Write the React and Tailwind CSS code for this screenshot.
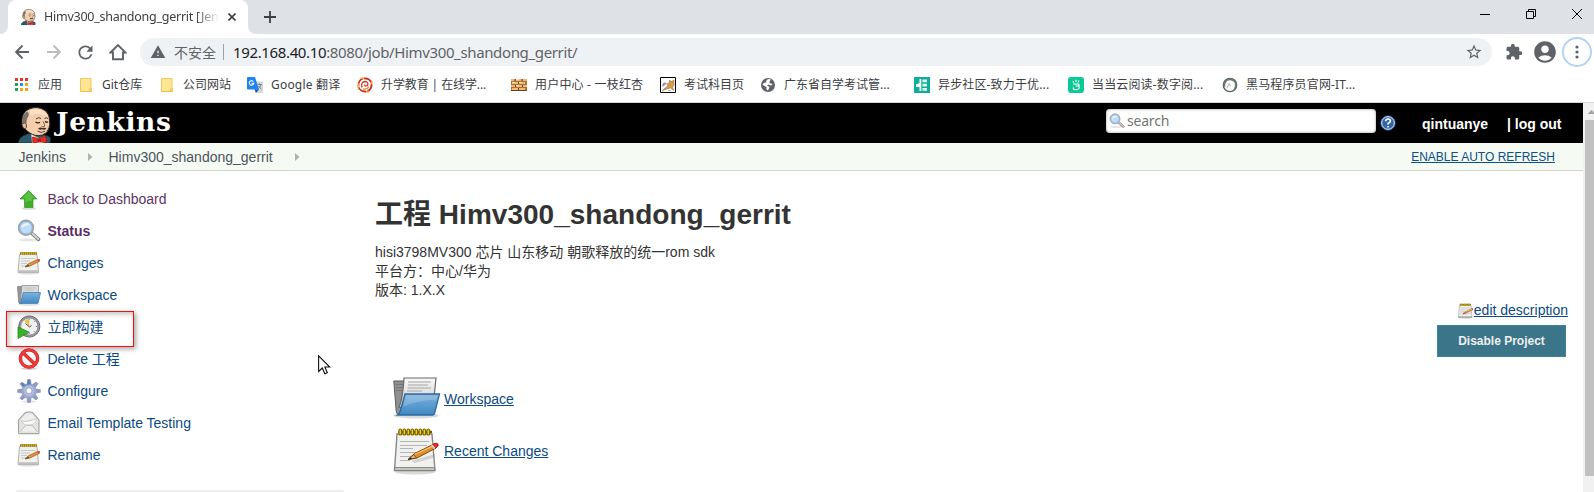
import React from "react";
import { MdExtension, MdStarBorder, MdAccountCircle, MdRefresh, MdWarning } from "react-icons/md";

const uiFont = "font-['Noto_Sans','Noto_Sans_CJK_SC',sans-serif]";

function Butler({ className }) {
  return (
    <svg className={className} viewBox="0 0 34 36">
      <path d="M0 36 L1.500 32 Q4 28.500 11 26.500 L26 28 Q31.500 29 32.500 31 L32 36 Z" fill="#2d5a6b" stroke="#16303a" strokeWidth=".7" />
      <path d="M4 14 Q4 5 11 2 Q20 -1.500 27 3.500 Q31.500 7 31.500 13.500 Q32.500 17 31 21 Q29.500 26.500 24.500 28 Q17 30 11 25.500 Q7.500 23 6 20.500 Q3.500 18 4 14 Z" fill="#f3cfae" stroke="#2d2521" strokeWidth="1" />
      <path d="M4.300 14 Q4.300 7 9 4.500 Q11.500 6 10.500 9 Q8 12 8.500 16 L7 20.500 Q3.800 18 4.300 14 Z" fill="#77736f" />
      <path d="M3.800 17 Q7 14.500 8.500 17.500 Q9 21 7 22 Q4.500 21.500 3.800 17 Z" fill="#eab998" stroke="#39312d" strokeWidth=".8" />
      <path d="M12 3.300 Q19 0 26 4.500 Q29 7 29.500 10 Q22 4 12 9 Z" fill="#fbdfc4" />
      <path d="M18 12 q2.500 -2.500 5 -.500 M26.500 11.500 q2 -1.500 3.500 0" fill="none" stroke="#4b3a30" strokeWidth="1" />
      <path d="M17.500 15 q2.500 1.800 4.500 .300 M27 14.500 q1.500 1.300 3 .300" fill="none" stroke="#1d1512" strokeWidth="1.200" />
      <path d="M25 14.500 Q27.500 18.500 26.500 19.500 Q25 20.200 23.500 19.300" fill="none" stroke="#7c5945" strokeWidth=".9" />
      <path d="M20 21.500 Q22.500 19.800 24.500 21 Q27 20 28.500 21.800 Q26 23.300 24.300 22.300 Q22 23.500 20 21.500 Z" fill="#3e3029" />
      <path d="M19.500 24 Q23 26.800 27 24.200" fill="none" stroke="#6e3f32" strokeWidth="1" />
      <path d="M13 27 L14 36 H28 L27.500 29 L21 31 Z" fill="#f4f4f4" stroke="#444" strokeWidth=".4" />
      <path d="M14.500 30 Q18 30.500 20.500 32 Q24 29.500 28 29.500 L28.500 36 L21.500 34.500 L15 36.500 Z" fill="#ee2a20" stroke="#8b1510" strokeWidth=".7" />
      <rect x="19.500" y="31.500" width="3.500" height="3.800" rx="1" fill="#b41913" />
    </svg>
  );
}

function Notepad({ className }) {
  return (
    <svg className={className} viewBox="0 0 48 48">
      <ellipse cx="22" cy="45" rx="20" ry="2.500" fill="#000" opacity=".15" />
      <path d="M4 7 H39 L42 43.500 H1.500 Z" fill="#f1f1ef" stroke="#888a85" strokeWidth="1.400" />
      <path d="M2 40.500 H41.500 L42 43.500 H1.500 Z" fill="#c4c5c1" stroke="#777" strokeWidth=".8" />
      <path d="M7 14.500 H36 M7 18.500 H34 M7 21.500 H20 M7 25.500 H26 M7 29.500 H23 M7 33.500 H17" stroke="#b4b5b1" strokeWidth="1.200" />
      <path d="M5.500 5 H39" stroke="#6e5a00" strokeWidth="2.500" />
      <g fill="#edd400" stroke="#7a6200" strokeWidth="1.100">
        {[6, 10, 14, 18, 22, 26, 30, 34].map((x) => (
          <rect key={x} x={x} y="2" width="2.600" height="6" rx="1.300" />
        ))}
      </g>
      <path d="M18 34 L42 27 L40 31 L22 36 Z" fill="#000" opacity=".12" />
      <path d="M15 32.500 L21.500 26.500 L40 17.500 L43 21 L24 31 Z" fill="#dd8e2e" stroke="#8a4b08" strokeWidth="1" />
      <path d="M22 27.200 L41 18.600" stroke="#f7c46c" strokeWidth="1.200" />
      <path d="M15 32.500 L20.500 27.700 L23.500 31 Z" fill="#d8b98a" stroke="#6d3c08" strokeWidth=".8" />
      <path d="M15 32.500 l2.800 -2.300 l1.300 1.600z" fill="#222" />
      <path d="M39.500 17.500 L42 16.300 Q46 16 45 19 L42.500 21.500 Z" fill="#ef2929" stroke="#a40000" strokeWidth=".8" />
      <path d="M38 18.500 L39.600 17.500 L42.600 21.200 L41 22 Z" fill="#d3d7cf" />
    </svg>
  );
}

const SmallNotepad = () => (
  <svg className="size-6" viewBox="0 0 24 24">
    <ellipse cx="11.500" cy="22.300" rx="10" ry="1.200" fill="#000" opacity=".12" />
    <path d="M2.500 3.500 H20 L21.500 21.500 H1 Z" fill="#f0f0ee" stroke="#a6a8a3" strokeWidth=".9" />
    <path d="M1.300 19.300 H21.200 L21.500 21.500 H1 Z" fill="#bfc0bc" />
    <path d="M4 7.500 H18 M4 10 H13 M4 12.500 H10 M4 15 H9" stroke="#c3c4c1" strokeWidth=".9" />
    <path d="M3 1 H20 V3.500 H3 Z" fill="#c9a92c" />
    <path d="M3.500 1 v3 M5.500 1 v3 M7.500 1 v3 M9.500 1 v3 M11.500 1 v3 M13.500 1 v3 M15.500 1 v3 M17.500 1 v3 M19.500 1 v3" stroke="#8a6f10" strokeWidth=".6" />
    <path d="M8 16 L11.500 12.700 L20.500 8.500 L22.300 10.400 L13 15 Z" fill="#e2953a" stroke="#94581a" strokeWidth=".7" />
    <path d="M8 16 L10.800 13.600 L12.300 15 Z" fill="#5a4630" />
    <path d="M20 8.700 Q22.500 7 23.200 9 L22 10.700 Z" fill="#e43a2f" />
  </svg>
);

function Folder({ className }) {
  return (
    <svg className={className} viewBox="0 0 48 48">
      <defs>
        <linearGradient id="folderBlue" x1="0" y1="0" x2="0" y2="1">
          <stop offset="0" stopColor="#7db3de" />
          <stop offset="1" stopColor="#3f87c2" />
        </linearGradient>
        <linearGradient id="paperGrey" x1="0" y1="0" x2="0" y2="1">
          <stop offset="0" stopColor="#fafafa" />
          <stop offset="1" stopColor="#c8c8c8" />
        </linearGradient>
      </defs>
      <ellipse cx="23" cy="40.500" rx="23" ry="3" fill="#000" opacity=".15" />
      <path d="M.8 6 H11 L12 9.500 V39 H5 Q3.500 39 3.200 36 Z" fill="#8f918e" stroke="#5c5d5b" strokeWidth="1" />
      <path d="M3 9.500 h7 M3 12.500 h7 M3 15.500 h7" stroke="#777" strokeWidth="1" />
      <path d="M11 3 H43 L40 32.500 H6 Q10 22.500 11 3 Z" fill="url(#paperGrey)" stroke="#686a67" strokeWidth="1.200" />
      <path d="M15 7 H38 M15 10 H35 M14.500 13 H38 M14 16 H29" stroke="#a4a5a3" strokeWidth="1.200" />
      <path d="M12 19 H46.500 L41.500 38.500 Q41 40 39.500 40 H4.500 Q7 38.500 8 33.500 Z" fill="url(#folderBlue)" stroke="#2c699f" strokeWidth="1.300" />
      <path d="M13.200 20.500 H44.500 L43.500 24.500 Q24 25.500 10.500 31.500 Z" fill="#fff" opacity=".18" />
    </svg>
  );
}

const SmallFolder = () => (
  <svg className="size-6" viewBox="0 0 24 24">
    <ellipse cx="12" cy="21.500" rx="11" ry="1.500" fill="#000" opacity=".12" />
    <path d="M.5 3.500 H5 V20.500 H3 Q1.800 20.500 1.700 19 Z" fill="#969795" stroke="#777876" strokeWidth=".7" />
    <path d="M5 2.500 H21.800 L20.500 16 H3.500 Z" fill="#dcdcdb" stroke="#8b8c8a" strokeWidth=".8" />
    <path d="M7.500 5 H19 M7.500 7 H17" stroke="#b9bab8" strokeWidth=".8" />
    <path d="M6.200 9.500 H23.500 L21.300 19.700 Q21 20.500 20.200 20.500 H2.500 Q4 19.500 4.500 17 Z" fill="url(#folderBlue)" stroke="#4683b8" strokeWidth=".8" />
  </svg>
);

function Magnifier({ className }) {
  return (
    <svg className={className} viewBox="0 0 24 24">
      <ellipse cx="11" cy="21" rx="9" ry="1.500" fill="#000" opacity=".1" />
      <path d="M15 14.500 L21.500 20.300" stroke="#7c7d7b" strokeWidth="3.600" strokeLinecap="round" />
      <path d="M15.500 14.700 L21.300 20" stroke="#d5d6d3" strokeWidth="1.900" strokeLinecap="round" strokeDasharray="2.200 .8" />
      <circle cx="9" cy="8.800" r="7.500" fill="#bcd8f3" stroke="#9fa19e" strokeWidth="1.400" />
      <circle cx="9" cy="8.800" r="6.300" fill="#c0dbf5" stroke="#7ba9d6" strokeWidth=".9" />
      <path d="M4.500 9.500 Q4.500 4 10 3.900 Q12 4 13 6 Q8 6 4.500 9.500 Z" fill="#fff" opacity=".7" />
    </svg>
  );
}

const UpArrow = () => (
  <svg className="size-6" viewBox="0 0 24 24">
    <ellipse cx="12" cy="21.500" rx="7" ry="1.300" fill="#000" opacity=".15" />
    <path d="M11.700 3.500 L19.800 12 H16 V20.500 H7.500 V12 H3 Z" fill="#3fb02c" stroke="#3d9d2b" strokeWidth=".8" strokeLinejoin="round" />
    <path d="M11.700 4.800 L17.500 11 H15 V14 Q11 13 8.500 15.500 V11 H5.500 Z" fill="#72cc58" opacity=".6" />
  </svg>
);

const ClockPlay = () => (
  <svg className="size-6" viewBox="0 0 24 24">
    <circle cx="12.300" cy="11.500" r="10.600" fill="#9a98a3" stroke="#64626f" strokeWidth=".9" />
    <circle cx="12.300" cy="11.500" r="8.600" fill="#f0f0ee" stroke="#807e88" strokeWidth=".7" />
    <path d="M12.300 11.500 L7.300 5.500 Q9.500 4 12.300 4 Z" fill="#e3c24e" />
    <path d="M12.500 12 L8.500 8.500 M12.500 12 L14.500 10.500" stroke="#4a4a4a" strokeWidth="1" />
    <path d="M12.300 3.500v1.200 M20.200 11.500h-1.400 M12.300 19v-1.200 M17.800 6l-.8 .8 M17.800 17l-.8 -.8" stroke="#777" strokeWidth=".9" />
    <path d="M1 12 L12.300 17.200 L1 23.500 Z" fill="#35b429" stroke="#26881b" strokeWidth=".8" />
  </svg>
);

const NoEntry = () => (
  <svg className="size-6" viewBox="0 0 24 24">
    <ellipse cx="12" cy="21.500" rx="8" ry="1.500" fill="#000" opacity=".18" />
    <circle cx="12" cy="11.500" r="8.600" fill="#f7f7f7" stroke="#c41a1a" strokeWidth="3.400" />
    <path d="M6 5.700 L18 17.300" stroke="#c41a1a" strokeWidth="3.300" />
    <circle cx="12" cy="11.500" r="8.600" fill="none" stroke="#f03a3a" strokeWidth="2.300" />
    <path d="M6 5.700 L18 17.300" stroke="#f03a3a" strokeWidth="2.200" />
  </svg>
);

const Gear = () => (
  <svg className="size-6" viewBox="0 0 24 24">
    <ellipse cx="12" cy="22.500" rx="7" ry="1.200" fill="#000" opacity=".12" />
    <g fill="#8d9bc4" stroke="#7783ab" strokeWidth=".5">
      {[0, 45, 90, 135, 180, 225, 270, 315].map((a) => (
        <path key={a} d="M9.800 6 L10.700 .6 H13.300 L14.200 6 Z" transform={`rotate(${a} 12 12)`} />
      ))}
    </g>
    <circle cx="12" cy="12" r="7.500" fill="#9ca8ce" />
    <path d="M10.700 .6 H13.300 L14.200 5.500 Q9 5 6.500 8 L4 5.500 L5.500 3.800 L8.500 6 L9.800 5.500 Z" fill="#5478b0" opacity=".75" />
    <circle cx="12" cy="12" r="5.300" fill="#b4bedc" />
    <circle cx="12" cy="11.800" r="3" fill="#fff" stroke="#8f9ac0" strokeWidth=".8" />
  </svg>
);

const Envelope = () => (
  <svg className="size-6" viewBox="0 0 24 24">
    <path d="M1.500 9 L8 2 Q9 1 11 1 H13 Q15 1 16 2 L22 9 V21.500 Q22 22.800 20.500 22.800 H3 Q1.500 22.800 1.500 21.500 Z" fill="#e3e4e1" stroke="#a0a29e" strokeWidth="1.100" />
    <path d="M2.800 9.700 L9 3 H15 L20.800 9.700 L16 14 L20.500 20.500 H3 L7.500 14 Z" fill="#eff0ee" />
    <path d="M4 9.500 Q9 12 18.500 7.800 Q19.500 9 19.500 10 L15 14.200 H8.500 L4 10.500 Z" fill="#fafafa" stroke="#bdbebb" strokeWidth=".8" />
    <path d="M3 21 L8.500 14.200 H15 L20.500 21" fill="none" stroke="#bdbebb" strokeWidth="1" />
    <path d="M2 22.500 H21.500" stroke="#a9aaa7" strokeWidth="1" />
  </svg>
);

const bookmarkFolder = (
  <svg className="h-4 w-3" viewBox="0 0 12 16">
    <path d="M.5 1.500 H11 V11 L11.500 12 V14.500 H.5 Z" fill="#ffe694" stroke="#f2c75c" strokeWidth="1" />
    <path d="M10 10.500 L11.500 11 V14.500 H9 V12 Z" fill="#f5cd62" />
    <path d="M.5 14.500 H11.500" stroke="#f2bc3e" strokeWidth="1" />
  </svg>
);

const appsGrid = (
  <svg className="size-[14px]" viewBox="0 0 14 14">
    <path d="M0 0h3v3H0zM5 0h3v3H5zM10 0h3v3h-3z" fill="#ea3323" />
    <path d="M0 5h3v3H0z" fill="#1da45f" /><path d="M5 5h3v3H5z" fill="#2a8cf0" /><path d="M10 5h3v3h-3z" fill="#f2a60d" />
    <path d="M0 10h3v3H0z" fill="#1da45f" /><path d="M5 10h3v3H5zM10 10h3v3h-3z" fill="#f2a60d" />
  </svg>
);

const translateIcon = (
  <svg className="size-4" viewBox="0 0 16 16">
    <path d="M5 4.500 H16 V16 H9 Z" fill="#d5d7da" />
    <path d="M1 0 H8 L12 12.500 H1 Q0 12.500 0 11.500 V1 Q0 0 1 0 Z" fill="#1f84ee" />
    <path d="M7.500 12.500 H12 L9 16 Z" fill="#1257b8" />
    <path d="M6.300 4.600 A2.200 2.200 0 1 0 6.700 6.300 H4.700" fill="none" stroke="#fff" strokeWidth="1.100" />
    <path d="M10.500 7.500 h4.500 M12.500 6.500 v1 M14 7.500 Q13 10.500 11 12 M11.500 9 Q13 11 14.500 12" fill="none" stroke="#6b7d8c" strokeWidth=".9" />
  </svg>
);

const swirl = (
  <svg className="size-4" viewBox="0 0 16 16">
    <g fill="none" strokeWidth="1.700">
      {[0, 90, 180, 270].map((a) => (
        <g key={a} transform={`rotate(${a} 8 8)`}>
          <path d="M1.500 9 Q1 3.500 6 1.500" stroke="#c9302c" />
          <path d="M3.500 1.500 Q7 .5 10 2.300" stroke="#f0a232" strokeWidth="1.400" />
        </g>
      ))}
      <path d="M5 10.500 Q3.500 5 8 4.500 Q12 5 10.500 8.500 Q8 10 7.500 7.500" stroke="#d2372a" strokeWidth="1.300" />
      <path d="M6 12 Q10 13 12 9.500" stroke="#e87c28" strokeWidth="1.200" />
    </g>
  </svg>
);

const bricks = (
  <svg className="size-4" viewBox="0 0 16 16">
    <path d="M0 2h16v12H0z" fill="#a57443" />
    <path d="M0 2h4v2H0zM5 2h6v2H5zM12 2h4v2h-4zM1 5h6v2H1zM8 5h6v2H8zM0 8h4v2H0zM5 8h6v2H5zM12 8h4v2h-4zM1 11h6v2H1zM8 11h6v2H8z" fill="#f5ba70" />
    <path d="M5 2h3v1H5zM1 5h3v1H1zM8 5h3v1H8zM5 8h3v1H5z" fill="#ffe6bd" />
    <path d="M4 2v2M11 2v2M7.500 5v2M4.500 8v2M11.500 8v2M7.500 11v2M0 13.500h16" stroke="#634428" strokeWidth="1" />
  </svg>
);

const cat = (
  <svg className="size-4" viewBox="0 0 16 16">
    <path d="M.5 .5h15v15H.5z" fill="#fff" stroke="#000" />
    <path d="M2 14 L5 11 L8 9 L7 7 L9 6 L9.500 3 L11.500 4.500 L14 3 V8 L12.500 10 L14 13.500 L10.500 11 L7 12 L4 13 Z" fill="#d79b48" stroke="#7a572d" strokeWidth=".4" />
    <path d="M2 9.500 Q2.500 5 5.500 5.500 L7 7 L5 7.500 L4 9 Z" fill="#8e9196" />
    <path d="M2 13.500 l3 -1 M8 13.500 l3 0" stroke="#999" strokeWidth=".7" />
  </svg>
);

const globe = (
  <svg className="size-4" viewBox="0 0 16 16">
    <circle cx="8" cy="8" r="7" fill="#5f6368" />
    <path d="M2.500 7.500 Q4 5 6.500 5.500 L6 4 L8 2 L11 2.600 Q9 4.500 9.500 6 L12.500 7 Q12 8.500 10.500 8.500 L8.500 7.500 L7 8.500 L9.500 10 L8 13.500 L6.500 12.500 L6.500 10 L4.500 9 Z" fill="#fff" />
  </svg>
);

const epubit = (
  <svg className="size-4" viewBox="0 0 16 16">
    <path d="M0 0h16v16H0z" fill="#0fae9b" />
    <path d="M5.500 2 H7.300 V14 H5.500 V10 H2 V7.500 L5.500 6 Z" fill="#fff" />
    <path d="M8.500 2.500h4.500v2.800H8.500zM8.500 6.800h4.500v2.700H8.500zM8.500 11h4.500v2.800H8.500z" fill="#dff7f2" />
  </svg>
);

const dangdang = (
  <svg className="size-4" viewBox="0 0 16 16">
    <rect width="16" height="16" rx="3" fill="#0bc996" />
    <path d="M5 4 L5.500 5.500 M8 2.800 V5 M11 3.500 L10 5.500 M5 7 H10 Q11.500 7 11 9 H7.500 M10 9 Q12 9.500 11 11.500 Q9 13.800 5.500 12 L5 10.500" fill="none" stroke="#fff" strokeWidth="1.100" />
  </svg>
);

const horse = (
  <svg className="size-4" viewBox="0 0 16 16">
    <circle cx="8" cy="8" r="6.700" fill="#fff" stroke="#56605e" strokeWidth="1.300" />
    <path d="M1.300 6 Q3 1 9 1.200 Q15 2 15 8 Q14 13 10 14.500 Q14 10 12.500 5.500 Q9 2 5 4 Q3 6 3.300 10 Q1 9 1.300 6 Z" fill="#6d7775" />
    <path d="M5 11 L7 6.500 M7 6.500 L8.500 9" stroke="#9aa09f" strokeWidth=".8" />
  </svg>
);

const bookmarks = [
  { icon: appsGrid, label: "应用", box: "ml-[15px] w-[65px]", gap: "ml-[9px]" },
  { icon: bookmarkFolder, label: "Git仓库", box: "w-[81px]", gap: "ml-[10px]" },
  { icon: bookmarkFolder, label: "公司网站", box: "w-[86px]", gap: "ml-[10px]" },
  { icon: translateIcon, label: "Google 翻译", box: "w-[110px]", gap: "ml-2", track: "tracking-[0.2px]" },
  { icon: swirl, label: "升学教育 | 在线学...", box: "w-[154px]", gap: "ml-2", track: "tracking-[-0.1px]" },
  { icon: bricks, label: "用户中心 - 一枝红杏", box: "w-[149px]", gap: "ml-2", track: "tracking-[0.2px]" },
  { icon: cat, label: "考试科目页", box: "w-[100px]", gap: "ml-2" },
  { icon: globe, label: "广东省自学考试管...", box: "w-[154px]", gap: "ml-2" },
  { icon: epubit, label: "异步社区-致力于优...", box: "w-[154px]", gap: "ml-2", track: "tracking-[0.15px]" },
  { icon: dangdang, label: "当当云阅读-数字阅...", box: "w-[154px]", gap: "ml-2", track: "tracking-[0.15px]" },
  { icon: horse, label: "黑马程序员官网-IT...", box: "w-[154px]", gap: "ml-2", track: "tracking-[0.15px]" },
];

const tasks = [
  { icon: <UpArrow />, label: "Back to Dashboard", color: "text-[#5c3566]" },
  { icon: <Magnifier className="size-6" />, label: "Status", color: "font-bold text-[#5c2d66]" },
  { icon: <SmallNotepad />, label: "Changes", color: "text-[#0b4a82]" },
  { icon: <SmallFolder />, label: "Workspace", color: "text-[#0b4a82]" },
  { icon: <ClockPlay />, label: "立即构建", color: "text-[#0b4a82]", marked: true },
  { icon: <NoEntry />, label: "Delete 工程", color: "text-[#0b4a82]" },
  { icon: <Gear />, label: "Configure", color: "text-[#0b4a82]" },
  { icon: <Envelope />, label: "Email Template Testing", color: "text-[#0b4a82]" },
  { icon: <SmallNotepad />, label: "Rename", color: "text-[#0b4a82]" },
];

function TabStrip() {
  return (
    <div className="flex h-[34px] bg-[#dee1e6]">
      <svg className="h-[34px] w-2 shrink-0" viewBox="0 0 8 34"><path d="M8 26 A8 8 0 0 1 0 34 H8 Z" fill="#fff" /></svg>
      <div className="flex h-[34px] w-[240px] shrink-0 items-center rounded-t-lg bg-white pl-[13px]">
        <Butler className="h-4 w-[15px] shrink-0" />
        <div className={`ml-2 w-[176px] shrink-0 whitespace-nowrap text-[12.500px] leading-5 tracking-[-0.26px] text-[#3c4043] [mask-image:linear-gradient(to_right,#000_86%,transparent_100%)] ${uiFont}`}>
          Himv300_shandong_gerrit [Jen
        </div>
        <svg className="ml-2 size-2" viewBox="0 0 8 8"><path d="M.5 .5 L7.500 7.500 M7.500 .5 L.5 7.500" stroke="#3c4043" strokeWidth="1.600" /></svg>
      </div>
      <svg className="h-[34px] w-2 shrink-0" viewBox="0 0 8 34"><path d="M0 26 A8 8 0 0 0 8 34 H0 Z" fill="#fff" /></svg>
      <svg className="ml-2 mt-[11px] size-3" viewBox="0 0 12 12"><path d="M6 0 V12 M0 6 H12" stroke="#3c4043" strokeWidth="1.800" /></svg>
      <div className="ml-auto mr-3 flex gap-9 pt-[9px]">
        <svg className="size-[10px]" viewBox="0 0 10 10"><path d="M0 5.500 H10" stroke="#000" /></svg>
        <svg className="size-[10px]" viewBox="0 0 10 10"><path d="M.5 2.500 H7.500 V9.500 H.5 Z M2.500 2.500 V.5 H9.500 V7.500 H7.500" fill="none" stroke="#000" /></svg>
        <svg className="size-[10px]" viewBox="0 0 10 10"><path d="M0 0 L10 10 M10 0 L0 10" stroke="#000" /></svg>
      </div>
    </div>
  );
}

function Toolbar() {
  return (
    <div className="flex h-9 items-center bg-white text-[#5f6368]">
      <svg className="ml-[15px] h-4 w-[14px] shrink-0" viewBox="0 0 14 16"><path d="M14 8 H1.500 M7.500 1.500 L1.200 8 L7.500 14.500" fill="none" stroke="#5f6368" strokeWidth="1.900" /></svg>
      <svg className="ml-[18px] h-4 w-[14px] shrink-0" viewBox="0 0 14 16"><path d="M0 8 H12.500 M6.500 1.500 L12.800 8 L6.500 14.500" fill="none" stroke="#babcbe" strokeWidth="1.900" /></svg>
      <MdRefresh className="ml-[14px] size-[21px] shrink-0" />
      <svg className="ml-[13px] size-[18px] shrink-0" viewBox="0 0 18 18"><path d="M1.500 9.500 L9 2 L16.500 9.500 H14 V16.200 H4 V9.500 Z" fill="none" stroke="#5f6368" strokeWidth="1.900" /></svg>
      <div className="ml-[13px] flex h-7 w-[1352px] shrink-0 items-center rounded-full bg-[#eff2f4] pl-[10px]">
        <MdWarning className="size-4 shrink-0" />
        <span className="ml-2 w-[42px] shrink-0 whitespace-nowrap font-['Noto_Sans_CJK_SC',sans-serif] text-sm leading-5">不安全</span>
        <span className="ml-[7px] h-4 w-px shrink-0 bg-[#9aa0a6]" />
        <span className={`ml-[9px] whitespace-nowrap text-[15px] leading-6 tracking-[-0.36px] ${uiFont}`}>
          <span className="text-[#202124]">192.168.40.10</span>:8080/job/Himv300_shandong_gerrit/
        </span>
        <MdStarBorder className="ml-auto mr-[9px] size-[18px] shrink-0" />
      </div>
      <MdExtension className="ml-[13px] size-[18px] shrink-0" />
      <MdAccountCircle className="ml-[9px] size-[26px] shrink-0" />
      <div className="ml-1 flex size-[30px] shrink-0 items-center justify-center rounded-full border-2 border-[#b3d3f7]">
        <svg className="h-4 w-1" viewBox="0 0 4 16"><g fill="#5f6368"><circle cx="2" cy="3" r="1.600" /><circle cx="2" cy="8" r="1.600" /><circle cx="2" cy="13" r="1.600" /></g></svg>
      </div>
    </div>
  );
}

function BookmarkBar() {
  return (
    <div className="flex h-[33px] items-center border-b border-[#d6d8db] bg-white pb-[3px]">
      {bookmarks.map((b) => (
        <div key={b.label} className={`flex shrink-0 items-center ${b.box}`}>
          <span className="shrink-0">{b.icon}</span>
          <span className={`whitespace-nowrap text-xs leading-4 text-[#3c4043] ${uiFont} ${b.gap} ${b.track || ""}`}>{b.label}</span>
        </div>
      ))}
    </div>
  );
}

function JenkinsHeader() {
  return (
    <div className="flex h-10 items-center bg-black font-['Liberation_Sans',sans-serif]">
      <Butler className="ml-[18px] mt-1 h-9 w-[34px] shrink-0" />
      <span className="ml-1 mt-[-3px] w-[120px] shrink-0 whitespace-nowrap font-['DejaVu_Serif',serif] text-[26.500px] font-bold leading-10 tracking-[0.6px] text-white">Jenkins</span>
      <div className="ml-auto mt-[-4px] flex h-6 w-[270px] shrink-0 items-center rounded bg-white pl-[3px] shadow-[inset_0_0_3px_#999]">
        <Magnifier className="size-4" />
        <span className={`ml-0.5 text-[14px] leading-5 tracking-[-0.2px] text-[#757575] ${uiFont}`}>search</span>
      </div>
      <svg className="ml-1 size-4 shrink-0" viewBox="0 0 16 16">
        <circle cx="8" cy="8" r="7.300" fill="#3465a4" stroke="#1d4780" strokeWidth="1" />
        <circle cx="8" cy="8" r="6.300" fill="none" stroke="#dce8f5" strokeWidth="1" />
        <path d="M5.700 6.300 Q5.700 4 8 4 Q10.400 4 10.400 6 Q10.400 7.200 8 8.500 V9.600 M8 10.900 V12.500" fill="none" stroke="#fff" strokeWidth="1.600" />
      </svg>
      <span className="ml-[26px] mt-px w-[67px] shrink-0 text-sm font-bold leading-5 text-white">qintuanye</span>
      <span className="ml-[18px] mt-px w-[76px] shrink-0 whitespace-nowrap text-sm font-bold leading-5 text-white">| log out</span>
    </div>
  );
}

const Chevron = () => (
  <svg className="h-2 w-[5px]" viewBox="0 0 5 8"><path d="M0 0 L4.500 4 L0 8 Z" fill="#b0b3b0" /></svg>
);

function Breadcrumbs() {
  return (
    <div className="flex h-7 items-center border-b border-[#d3d7cf] bg-[#f5faf3] pl-[18.500px] font-['Liberation_Sans',sans-serif] text-sm leading-5 text-[#4d545d]">
      <span className="w-[69.500px]">Jenkins</span>
      <Chevron />
      <span className="ml-[15.500px] w-[186.500px] whitespace-nowrap">Himv300_shandong_gerrit</span>
      <Chevron />
      <a className="ml-auto mr-[28px] whitespace-nowrap text-xs text-[#0b5188] underline">ENABLE AUTO REFRESH</a>
    </div>
  );
}

function SidePanel() {
  return (
    <div className="w-[344px] shrink-0 pt-3 text-sm">
      {tasks.map((t) => (
        <div
          key={t.label}
          className={
            t.marked
              ? "-mb-[4px] ml-[6px] flex h-9 w-[128px] items-start border border-[#f0100c] pl-[10px] pt-[3px] shadow-[2px_2px_5px_rgba(0,0,0,0.35),inset_2px_2px_5px_rgba(0,0,0,0.25)]"
              : "flex h-8 items-center pl-[17px]"
          }
        >
          {t.icon}
          <a className={`whitespace-nowrap ${t.marked ? "leading-6" : "leading-5"} ml-[6.500px] ${t.color}`}>{t.label}</a>
        </div>
      ))}
      <div className="ml-4 mt-[19px] h-1 rounded bg-[#eeeeee]" />
    </div>
  );
}

function MainPanel() {
  return (
    <div className="min-w-0 flex-1 pl-[31px] text-sm text-[#333]">
      <h1 className="mt-[24px] whitespace-nowrap text-[28px] font-bold leading-10 tracking-[0.02px]">工程 Himv300_shandong_gerrit</h1>
      <div className="mt-[8px] h-[57px] whitespace-nowrap leading-[19px]">
        <p>hisi3798MV300 芯片 山东移动 朝歌释放的统一rom sdk</p>
        <p>平台方：中心/华为</p>
        <p>版本: 1.X.X</p>
      </div>
      <div className="flex h-5 items-center justify-end pr-[15px]">
        <Notepad className="mt-px size-4" />
        <a className="leading-5 text-[#0b4a82] underline">edit description</a>
      </div>
      <div className="mt-[5px] flex justify-end pr-[17px]">
        <button className="h-8 w-[129px] border border-[#3b8499] bg-[#3b758a] text-xs font-bold text-[#eee]">Disable Project</button>
      </div>
      <div className="mt-[18px] pl-[18px] text-[#0b4a82]">
        <div className="flex h-12 items-center">
          <Folder className="size-12" />
          <a className="ml-[3px] underline">Workspace</a>
        </div>
        <div className="mt-1 flex h-12 items-center">
          <Notepad className="size-12" />
          <a className="ml-[3px] underline">Recent Changes</a>
        </div>
      </div>
    </div>
  );
}

export default function App() {
  return (
    <div className="relative h-[492px] w-[1594px] overflow-hidden bg-white">
      <TabStrip />
      <Toolbar />
      <BookmarkBar />
      <div className="flex h-[389px]">
        <div className="w-[1583px] shrink-0">
          <JenkinsHeader />
          <Breadcrumbs />
          <div className="flex font-['Liberation_Sans','Noto_Sans_CJK_SC',sans-serif]">
            <SidePanel />
            <MainPanel />
          </div>
        </div>
        <div className="flex w-[11px] shrink-0 flex-col bg-[#f1f1f1] pl-[2px]">
          <svg className="h-[17px] w-[9px]" viewBox="0 0 9 17"><path d="M2.500 11 L6.500 7 L10.500 11 Z" fill="#a3a3a3" /></svg>
          <div className="h-[356px] bg-[#c1c1c1]" />
        </div>
      </div>
      <svg className="absolute left-[318px] top-[355px] h-5 w-[13px]" viewBox="0 0 13 20">
        <path d="M.6 .8 V16.500 L4.300 13 L6.800 18.800 L9.300 17.700 L6.900 12 H11.800 Z" fill="#fff" stroke="#111" strokeWidth="1.100" />
      </svg>
    </div>
  );
}
